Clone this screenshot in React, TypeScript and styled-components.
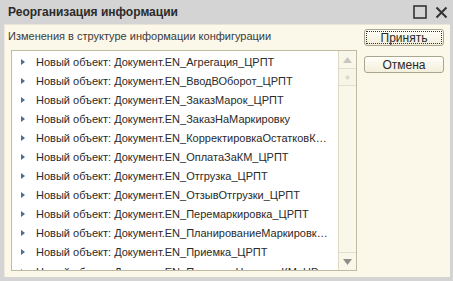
import React from 'react'
import styled, { createGlobalStyle } from 'styled-components'

const GlobalStyle = createGlobalStyle`
    html, body {
        margin: 0;
        padding: 0;
        background: #d4d4d4;
    }
    body {
        font-family: "Liberation Sans", Arial, sans-serif;
    }
`

const items = [
    'Новый объект: Документ.EN_Агрегация_ЦРПТ',
    'Новый объект: Документ.EN_ВводВОборот_ЦРПТ',
    'Новый объект: Документ.EN_ЗаказМарок_ЦРПТ',
    'Новый объект: Документ.EN_ЗаказНаМаркировку',
    'Новый объект: Документ.EN_КорректировкаОстатковКМ_ЦРПТ',
    'Новый объект: Документ.EN_ОплатаЗаКМ_ЦРПТ',
    'Новый объект: Документ.EN_Отгрузка_ЦРПТ',
    'Новый объект: Документ.EN_ОтзывОтгрузки_ЦРПТ',
    'Новый объект: Документ.EN_Перемаркировка_ЦРПТ',
    'Новый объект: Документ.EN_ПланированиеМаркировки_ЦРПТ',
    'Новый объект: Документ.EN_Приемка_ЦРПТ',
    'Новый объект: Документ.EN_ПроверкаНомеровКМ_ЦРПТ',
]

const App = () => {
    return (
        <>
            <GlobalStyle />
            <Window>
                <TitleBar>
                    <Title>Реорганизация информации</Title>
                    <TitleButtons>
                        <svg width="14" height="14" viewBox="0 0 14 14">
                            <rect x="1" y="1" width="12" height="12" fill="none" stroke="#333" strokeWidth="1.6" />
                        </svg>
                        <svg width="13" height="13" viewBox="0 0 13 13">
                            <path d="M1.5 1.5 L11.5 11.5 M11.5 1.5 L1.5 11.5" stroke="#333" strokeWidth="2" />
                        </svg>
                    </TitleButtons>
                </TitleBar>
                <Body>
                    <Main>
                        <Caption>Изменения в структуре информации конфигурации</Caption>
                        <ListBox>
                            <Rows>
                                {items.map((text, i) => (
                                    <Row key={i}>
                                        <Arrow />
                                        <RowText>{text}</RowText>
                                    </Row>
                                ))}
                            </Rows>
                            <ScrollBar>
                                <ScrollBtn>
                                    <svg width="9" height="6" viewBox="0 0 9 6">
                                        <path d="M4.5 0 L9 6 L0 6 Z" fill="#c9c7bd" />
                                    </svg>
                                </ScrollBtn>
                                <Thumb>
                                    <svg width="5" height="5" viewBox="0 0 5 5">
                                        <circle cx="2.5" cy="2.5" r="2" fill="#dcd9c8" />
                                    </svg>
                                </Thumb>
                                <Track />
                                <ScrollBtn>
                                    <svg width="9" height="6" viewBox="0 0 9 6">
                                        <path d="M0 0 L9 0 L4.5 6 Z" fill="#8e8d88" />
                                    </svg>
                                </ScrollBtn>
                            </ScrollBar>
                        </ListBox>
                    </Main>
                    <Side>
                        <Button $default>Принять</Button>
                        <Button>Отмена</Button>
                    </Side>
                </Body>
            </Window>
        </>
    )
}

export default App

const Window = styled.div`
    width: 453px;
    height: 281px;
    display: flex;
    flex-direction: column;
    background: #d4d4d4;
    box-sizing: border-box;
    padding: 0 3px 4px 4px;
`

const TitleBar = styled.div`
    height: 24px;
    display: flex;
    align-items: center;
    justify-content: space-between;
    padding: 0 2px 0 4px;
`

const Title = styled.div`
    font-family: "Liberation Sans", Arial, sans-serif;
    font-weight: bold;
    font-size: 12px;
    color: #2b2b2b;
`

const TitleButtons = styled.div`
    display: flex;
    align-items: center;
    gap: 8px;
`

const Body = styled.div`
    flex: 1;
    display: flex;
    background: #fbf8e9;
    border-top: 1px solid #e8e5d6;
    border-left: 1px solid #ece9da;
    padding: 0 6px 0 6px;
    min-height: 0;
`

const Main = styled.div`
    flex: 1;
    display: flex;
    flex-direction: column;
    min-width: 0;
`

const Caption = styled.div`
    font-family: "Liberation Sans", Arial, sans-serif;
    font-size: 11px;
    color: #3a3a3a;
    height: 22px;
    line-height: 17px;
    padding-top: 3px;
    margin-left: -3px;
`

const ListBox = styled.div`
    width: 346px;
    height: 221px;
    box-sizing: border-box;
    border: 1px solid #bfbba3;
    background: #fff;
    display: flex;
    overflow: hidden;
`

const Rows = styled.div`
    flex: 1;
    min-width: 0;
    padding-top: 1px;
`

const Row = styled.div`
    height: 19.1px;
    display: flex;
    align-items: center;
    padding-left: 9px;
`

const Arrow = styled.span`
    width: 0;
    height: 0;
    border-top: 3.5px solid transparent;
    border-bottom: 3.5px solid transparent;
    border-left: 4px solid #4b6d8f;
    margin-right: 11px;
    flex-shrink: 0;
`

const RowText = styled.span`
    font-family: "Liberation Sans", Arial, sans-serif;
    font-size: 11px;
    color: #2a2a2a;
    white-space: nowrap;
    overflow: hidden;
    text-overflow: ellipsis;
    padding-right: 6px;
`

const ScrollBar = styled.div`
    width: 17px;
    flex-shrink: 0;
    display: flex;
    flex-direction: column;
    border-left: 1px solid #dcd8c2;
    background: #f9f7ea;
`

const ScrollBtn = styled.div`
    height: 17px;
    display: flex;
    align-items: center;
    justify-content: center;
    border-bottom: 1px solid #e2dfcc;
    &:last-child {
        border-bottom: none;
        border-top: 1px solid #e2dfcc;
    }
`

const Thumb = styled.div`
    height: 16px;
    display: flex;
    align-items: center;
    justify-content: center;
    border-bottom: 1px solid #e2dfcc;
    background: #f7f5e8;
`

const Track = styled.div`
    flex: 1;
`

const Side = styled.div`
    width: 80px;
    display: flex;
    flex-direction: column;
    gap: 10px;
    padding-top: 4px;
    margin-left: 6px;
`

const Button = styled.button<{ $default?: boolean }>`
    height: 17px;
    width: 80px;
    border: 1px solid #a9a690;
    border-radius: 3px;
    background: linear-gradient(to bottom, #fffef8 0%, #f3efdc 100%);
    font-family: "Liberation Sans", Arial, sans-serif;
    font-size: 12px;
    line-height: 14px;
    color: #2a2a2a;
    padding: 0;
    outline: ${p => (p.$default ? '1px dotted #333' : 'none')};
    outline-offset: -3px;
`
